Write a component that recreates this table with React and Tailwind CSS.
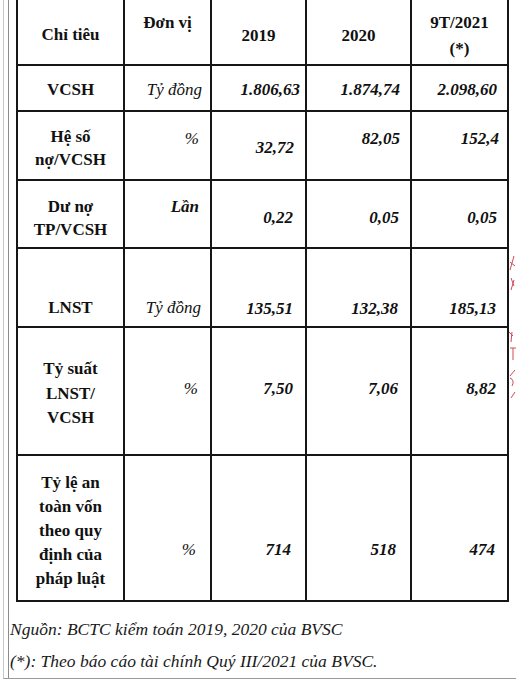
import React from 'react';

// column widths taken from the scan: 109 | 87 | 95 | 105 | 97
const rows = [
  {
    h: 'h-[66px]',
    cells: [
      { text: ['Chỉ tiêu'], cls: 'items-center justify-center pt-[6px] font-bold' },
      { text: ['Đơn vị'], cls: 'items-start justify-center pt-[11px] font-bold' },
      { text: ['2019'], cls: 'items-center justify-center pt-[7px] font-bold' },
      { text: ['2020'], cls: 'items-center justify-center pt-[7px] font-bold' },
      { text: ['9T/2021', '(*)'], cls: 'items-start justify-center pt-[10px] font-bold leading-[26px]' },
    ],
  },
  {
    h: 'h-[46px]',
    cells: [
      { text: ['VCSH'], cls: 'items-center justify-center pt-[3px] font-bold' },
      { text: ['Tỷ đồng'], cls: 'items-center justify-end pt-[3px] pr-[8px] italic' },
      { text: ['1.806,63'], cls: 'items-center justify-end pt-[3px] pr-[5px] font-bold italic' },
      { text: ['1.874,74'], cls: 'items-center justify-end pt-[3px] pr-[10px] font-bold italic' },
      { text: ['2.098,60'], cls: 'items-center justify-end pt-[3px] pr-[10px] font-bold italic' },
    ],
  },
  {
    h: 'h-[69px]',
    cells: [
      { text: ['Hệ số', 'nợ/VCSH'], cls: 'items-center justify-center pt-[5px] font-bold leading-[23px]' },
      { text: ['%'], cls: 'items-start justify-end pt-[15px] pr-[11px] italic' },
      { text: ['32,72'], cls: 'items-center justify-end pt-[5px] pr-[11px] font-bold italic' },
      { text: ['82,05'], cls: 'items-start justify-end pt-[15px] pr-[10px] font-bold italic' },
      { text: ['152,4'], cls: 'items-start justify-end pt-[15px] pr-[8px] font-bold italic' },
    ],
  },
  {
    h: 'h-[68px]',
    cells: [
      { text: ['Dư nợ', 'TP/VCSH'], cls: 'items-center justify-center pt-[7px] font-bold leading-[23px]' },
      { text: ['Lần'], cls: 'items-start justify-end pt-[14px] pr-[11px] font-bold italic' },
      { text: ['0,22'], cls: 'items-center justify-end pt-[8px] pr-[12px] font-bold italic' },
      { text: ['0,05'], cls: 'items-center justify-end pt-[8px] pr-[11px] font-bold italic' },
      { text: ['0,05'], cls: 'items-center justify-end pt-[8px] pr-[10px] font-bold italic' },
    ],
  },
  {
    h: 'h-[79px]',
    cells: [
      { text: ['LNST'], cls: 'items-end justify-center pb-[6px] font-bold' },
      { text: ['Tỷ đồng'], cls: 'items-end justify-end pb-[6px] pr-[9px] italic' },
      { text: ['135,51'], cls: 'items-end justify-end pb-[5px] pr-[12px] font-bold italic' },
      { text: ['132,38'], cls: 'items-end justify-end pb-[5px] pr-[12px] font-bold italic' },
      { text: ['185,13'], cls: 'items-end justify-end pb-[5px] pr-[11px] font-bold italic' },
    ],
  },
  {
    h: 'h-[128px]',
    cells: [
      { text: ['Tỷ suất', 'LNST/', 'VCSH'], cls: 'items-center justify-center pt-[6px] font-bold leading-[24.5px]' },
      { text: ['%'], cls: 'items-center justify-end pb-[4px] pr-[12px] italic' },
      { text: ['7,50'], cls: 'items-center justify-end pb-[4px] pr-[12px] font-bold italic' },
      { text: ['7,06'], cls: 'items-center justify-end pb-[4px] pr-[12px] font-bold italic' },
      { text: ['8,82'], cls: 'items-center justify-end pb-[4px] pr-[11px] font-bold italic' },
    ],
  },
  {
    h: 'h-[146px]',
    cells: [
      { text: ['Tỷ lệ an', 'toàn vốn', 'theo quy', 'định của', 'pháp luật'], cls: 'items-center justify-center pt-[6px] font-bold' },
      { text: ['%'], cls: 'items-end justify-end pb-[38px] pr-[14px] italic' },
      { text: ['714'], cls: 'items-end justify-end pb-[38px] pr-[14px] font-bold italic' },
      { text: ['518'], cls: 'items-end justify-end pb-[38px] pr-[14px] font-bold italic' },
      { text: ['474'], cls: 'items-end justify-end pb-[38px] pr-[12px] font-bold italic' },
    ],
  },
];

const colW = ['w-[109px]', 'w-[87px]', 'w-[95px]', 'w-[105px]', 'w-[97px]'];

export default function App() {
  return (
    <div className="relative w-[516px] h-[681px] bg-white overflow-hidden [font-family:'Liberation_Serif',serif] text-[#111]">
      {/* scanned page edges */}
      <div className="ml-[3px] h-[679px] border-l border-[#c8c8c8] border-b border-b-[#9a9a9a]">
        <div className="ml-[4px] h-full w-[509px] border-l border-r border-[#8c8c8c]">

          {/* table */}
          <div className="ml-[7px] w-[495px] flex flex-col text-[17px] leading-[24px]">
            {rows.map((row, i) => (
              <div key={i} className={`flex ${row.h}`}>
                {row.cells.map((c, j) => (
                  <div
                    key={j}
                    className={`flex ${colW[j]} border-b-2 border-r-2 border-[#161616] ${j === 0 ? 'border-l-2' : ''} ${c.cls}`}
                  >
                    <div className={j === 0 || i === 0 ? 'text-center' : 'text-right'}>
                      {c.text.map((t, k) => (
                        <div key={k}>{t}</div>
                      ))}
                    </div>
                  </div>
                ))}
              </div>
            ))}
          </div>

          {/* notes */}
          <div className="mt-[11px] ml-[1px] italic text-[17.5px] leading-[32px] text-[#1a1a1a]">
            <p>Nguồn: BCTC kiểm toán 2019, 2020 của BVSC</p>
            <p>(*): Theo báo cáo tài chính Quý III/2021 của BVSC.</p>
          </div>
        </div>
      </div>

      {/* red stamp marks at right margin */}
      <svg className="absolute left-[508px] top-[252px]" width="8" height="150" viewBox="0 0 8 150" fill="none" stroke="#d04a5a" strokeWidth="1">
        <path d="M6 4 L2 18 M2 10 L7 14" />
        <path d="M3 26 L6 34 M6 28 L3 38" />
        <path d="M1 80 L5 84 M4 80 L3 90" />
        <path d="M2 96 L8 96 M5 96 L5 108" />
        <path d="M7 118 L2 124 M2 126 Q7 128 4 134 M7 140 L3 146" />
      </svg>
    </div>
  );
}
